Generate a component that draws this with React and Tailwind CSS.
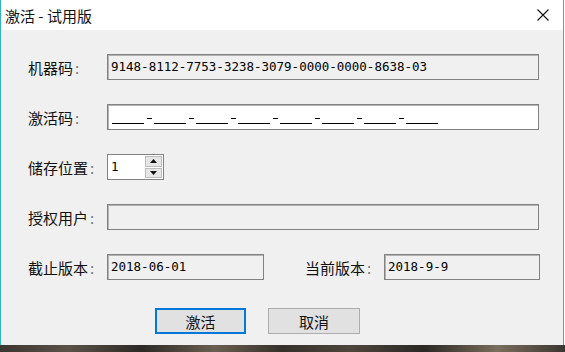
import React from "react";

const cjk = { fontFamily: '"Noto Sans CJK SC", "Noto Sans", sans-serif' };
const mono = { fontFamily: '"DejaVu Sans Mono", "Liberation Mono", monospace' };

function Label({ children, w = "w-[79px]" }) {
  return (
    <div className={`${w} shrink-0 text-[15px] leading-none text-[#111] flex items-center`} style={cjk}>
      <span>{children}</span>
      <span className="ml-[2px] text-[#777]">:</span>
    </div>
  );
}

function Box({ children, white = false, w = "w-[432px]" }) {
  return (
    <div
      className={`${w} h-[26px] shrink-0 border border-[#828282] shadow-[inset_1px_1px_0_#b4b4b4] flex items-center pl-[3px] text-[12.5px] text-black ${white ? "bg-white" : "bg-[#f0f0f0]"}`}
      style={mono}
    >
      {children}
    </div>
  );
}

function Mask() {
  const groups = Array.from({ length: 8 });
  return (
    <div className="flex items-end h-[16px]">
      {groups.map((_, i) => (
        <React.Fragment key={i}>
          <span className="w-[32px] h-[1.5px] bg-black mb-[1px]" />
          {i < 7 && (
            <span className="w-[10px] flex justify-center mb-[6px]">
              <span className="w-[5px] h-[1px] bg-black" />
            </span>
          )}
        </React.Fragment>
      ))}
    </div>
  );
}

export default function App() {
  return (
    <div className="w-[565px] h-[352px] overflow-hidden flex flex-col bg-white">
      <div className="w-[564px] h-[345px] border-l border-r border-[#2fb4c2] flex flex-col">
        <div className="h-[30px] bg-white flex items-center justify-between pl-[4px] pr-[13px]">
          <span className="text-[15px] text-[#111] leading-none" style={cjk}>
            激活 - 试用版
          </span>
          <svg width="14" height="14" viewBox="0 0 14 14">
            <path d="M1.5 1.5 L12.5 12.5 M12.5 1.5 L1.5 12.5" stroke="#111" strokeWidth="1.1" />
          </svg>
        </div>
        <div className="flex-1 bg-[#f0f0f0] flex flex-col pl-[27px] pt-[24px]">
          <div className="flex items-center gap-0">
            <Label>机器码</Label>
            <Box>9148-8112-7753-3238-3079-0000-0000-8638-03</Box>
          </div>
          <div className="flex items-center mt-[24px]">
            <Label>激活码</Label>
            <Box white>
              <div className="pl-[1px]">
                <Mask />
              </div>
            </Box>
          </div>
          <div className="flex items-center mt-[24px]">
            <Label>储存位置</Label>
            <div className="w-[57px] h-[26px] border border-[#828282] bg-white flex">
              <div className="flex-1 flex items-center pl-[3px] text-[12.5px]" style={mono}>
                1
              </div>
              <div className="w-[17px] my-[1px] mr-[1px] flex flex-col gap-[1px]">
                <div className="flex-1 bg-[#e6e6e6] border border-[#bcbcbc] flex items-center justify-center">
                  <svg width="7" height="4" viewBox="0 0 7 4">
                    <path d="M0 4 L3.5 0 L7 4 Z" fill="#111" />
                  </svg>
                </div>
                <div className="flex-1 bg-[#e6e6e6] border border-[#bcbcbc] flex items-center justify-center">
                  <svg width="7" height="4" viewBox="0 0 7 4">
                    <path d="M0 0 L3.5 4 L7 0 Z" fill="#111" />
                  </svg>
                </div>
              </div>
            </div>
          </div>
          <div className="flex items-center mt-[24px]">
            <Label>授权用户</Label>
            <Box />
          </div>
          <div className="flex items-center mt-[24px]">
            <Label>截止版本</Label>
            <Box w="w-[157px]">2018-06-01</Box>
            <div className="w-[41px] shrink-0" />
            <Label>当前版本</Label>
            <Box w="w-[156px]">2018-9-9</Box>
          </div>
          <div className="flex mt-[28px] pl-[127px] gap-[22px]">
            <button
              className="w-[91px] h-[26px] bg-[#e1e1e1] border-2 border-[#0078d7] text-[15px] leading-none text-[#111] flex items-center justify-center"
              style={cjk}
            >
              激活
            </button>
            <button
              className="w-[92px] h-[26px] bg-[#e1e1e1] border border-[#adadad] text-[15px] leading-none text-[#111] flex items-center justify-center"
              style={cjk}
            >
              取消
            </button>
          </div>
        </div>
      </div>
      <div className="h-[7px] w-full bg-[linear-gradient(90deg,#3a3631_0%,#5b5247_12%,#2c2926_25%,#6a5f50_38%,#34302b_50%,#4e463c_62%,#2a2724_75%,#7a6e5c_88%,#3b3631_100%)]" />
    </div>
  );
}
